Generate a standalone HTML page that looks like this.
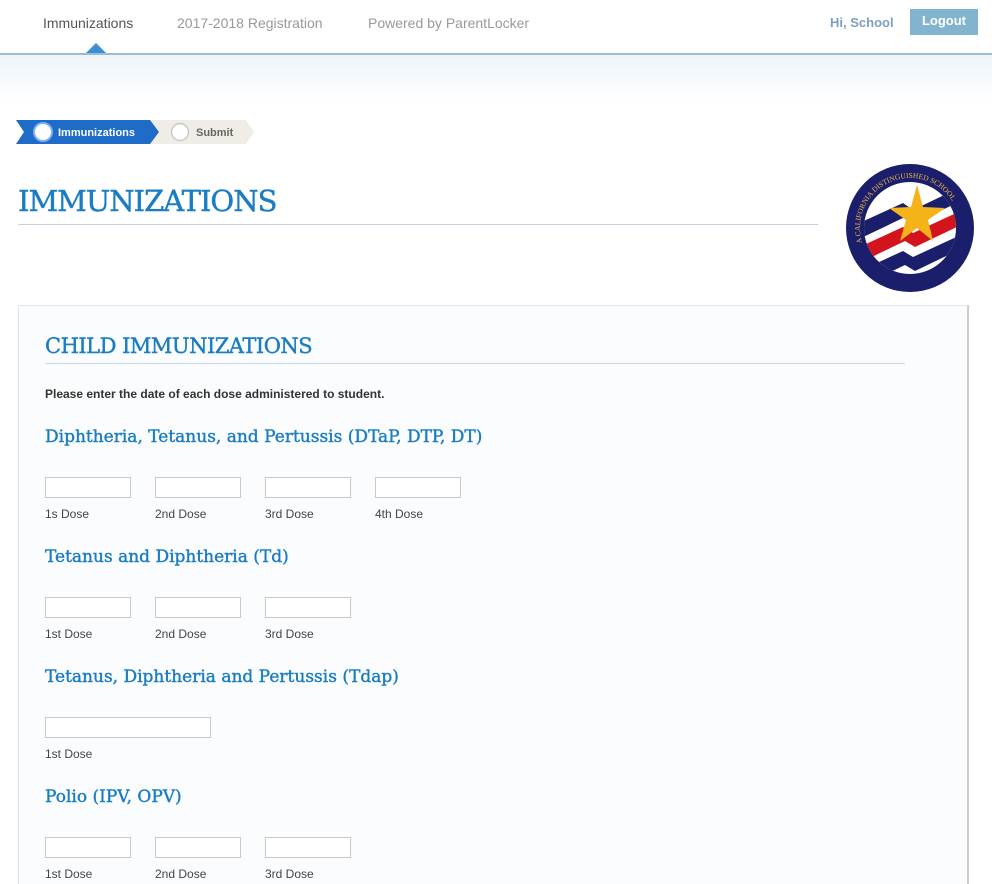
<!DOCTYPE html>
<html><head><style>
html,body{margin:0;width:992px;height:884px;overflow:hidden}
body{background:#fff;font-family:"Liberation Sans",sans-serif;position:relative}
.a{position:absolute}
.nav{font-size:14px;color:#999;top:15px}
.h{font-family:"DejaVu Serif","Liberation Serif",serif;color:#1a7dc2;position:absolute;-webkit-text-stroke:0.4px #1a7dc2}
input{position:absolute;width:84px;height:19px;border:1px solid #c8c8c8;background:#fff;margin:0;padding:0}
.l{position:absolute;font-size:12px;color:#444}
</style></head><body>
<div class="a nav" style="left:43px;color:#555">Immunizations</div>
<div class="a nav" style="left:177px">2017-2018 Registration</div>
<div class="a nav" style="left:368px">Powered by ParentLocker</div>
<div class="a" style="left:830px;top:15px;font-size:13px;font-weight:bold;color:#7f9fc0">Hi, School</div>
<div class="a" style="left:910px;top:9px;width:68px;height:26px;background:#82b4d0;color:#fff;font-weight:bold;font-size:13px;text-align:center;line-height:24px">Logout</div>
<div class="a" style="left:0;top:53px;width:992px;height:2px;background:#9bbcd8"></div>
<div class="a" style="left:86px;top:43px;width:0;height:0;border-left:10px solid transparent;border-right:10px solid transparent;border-bottom:10px solid #3b8fd5"></div>
<div class="a" style="left:0;top:55px;width:992px;height:45px;background:linear-gradient(#eef4f9,#fff)"></div>
<svg class="a" style="left:16px;top:120px" width="240" height="24">
<polygon points="134,0 230,0 238,12 230,24 134,24" fill="#efede6"/>
<polygon points="0,0 134,0 143,12 134,24 0,24 8,12" fill="#1e6cc8"/>
<circle cx="27" cy="12" r="9" fill="#fff" stroke="#7fb3f0" stroke-width="2"/>
<circle cx="164" cy="12" r="8.5" fill="#fff" stroke="#c8c8c8" stroke-width="1.5"/>
<text x="42" y="16" fill="#fff" font-size="11" font-weight="bold" font-family="Liberation Sans">Immunizations</text>
<text x="180" y="16" fill="#666" font-size="11" font-weight="bold" font-family="Liberation Sans">Submit</text>
</svg>
<div class="h" style="left:18px;top:184px;font-size:29px;letter-spacing:-1px">IMMUNIZATIONS</div>
<div class="a" style="left:18px;top:224px;width:800px;height:1px;background:#ccd"></div>
<svg class="a" style="left:845px;top:163px" width="130" height="130" viewBox="0 0 130 130">
<circle cx="65" cy="65" r="64" fill="#1b1f6b"/>
<circle cx="65" cy="65" r="46" fill="#fff"/>
<clipPath id="c"><circle cx="65" cy="65" r="46"/></clipPath>
<g clip-path="url(#c)">
<path d="M10 62 L58 40 L68 47 L120 22 L120 36 L70 60 L60 54 L10 78Z" fill="#1b1f6b"/>
<path d="M10 86 L58 64 L68 70 L120 46 L120 60 L70 84 L60 78 L10 102Z" fill="#d4141d"/>
<path d="M10 110 L58 88 L68 94 L120 70 L120 84 L70 108 L60 102 L10 126Z" fill="#1b1f6b"/>
</g>
<polygon points="72,22 78,44 100,45 83,57 88,78 72,65 55,78 61,57 44,45 66,44" fill="#f5b31a"/>
<path id="arc" d="M17.2 79.6 A50 50 0 1 1 112.8 79.6" fill="none"/>
<text fill="#e8b84a" font-size="7.5" font-family="Liberation Serif"><textPath href="#arc">A CALIFORNIA DISTINGUISHED SCHOOL</textPath></text>
</svg>
<div class="a" style="left:18px;top:305px;width:948px;height:600px;background:#fbfcfd;border:1px solid #e2e4e8;border-right:2px solid #ccc"></div>
<div class="h" style="left:45px;top:334px;font-size:21px;letter-spacing:-0.5px">CHILD IMMUNIZATIONS</div>
<div class="a" style="left:45px;top:363px;width:860px;height:1px;background:#cdd8e4"></div>
<div class="a" style="left:45px;top:387px;font-size:12px;font-weight:bold;color:#333">Please enter the date of each dose administered to student.</div>
<div class="h" style="left:45px;top:427px;font-size:17px">Diphtheria, Tetanus, and Pertussis (DTaP, DTP, DT)</div>
<input style="left:45px;top:477px"><input style="left:155px;top:477px"><input style="left:265px;top:477px"><input style="left:375px;top:477px">
<div class="l" style="left:45px;top:507px">1s Dose</div><div class="l" style="left:155px;top:507px">2nd Dose</div><div class="l" style="left:265px;top:507px">3rd Dose</div><div class="l" style="left:375px;top:507px">4th Dose</div>
<div class="h" style="left:45px;top:547px;font-size:17px">Tetanus and Diphtheria (Td)</div>
<input style="left:45px;top:597px"><input style="left:155px;top:597px"><input style="left:265px;top:597px">
<div class="l" style="left:45px;top:627px">1st Dose</div><div class="l" style="left:155px;top:627px">2nd Dose</div><div class="l" style="left:265px;top:627px">3rd Dose</div>
<div class="h" style="left:45px;top:667px;font-size:17px">Tetanus, Diphtheria and Pertussis (Tdap)</div>
<input style="left:45px;top:717px;width:164px">
<div class="l" style="left:45px;top:747px">1st Dose</div>
<div class="h" style="left:45px;top:787px;font-size:17px">Polio (IPV, OPV)</div>
<input style="left:45px;top:837px"><input style="left:155px;top:837px"><input style="left:265px;top:837px">
<div class="l" style="left:45px;top:867px">1st Dose</div><div class="l" style="left:155px;top:867px">2nd Dose</div><div class="l" style="left:265px;top:867px">3rd Dose</div>
</body></html>
